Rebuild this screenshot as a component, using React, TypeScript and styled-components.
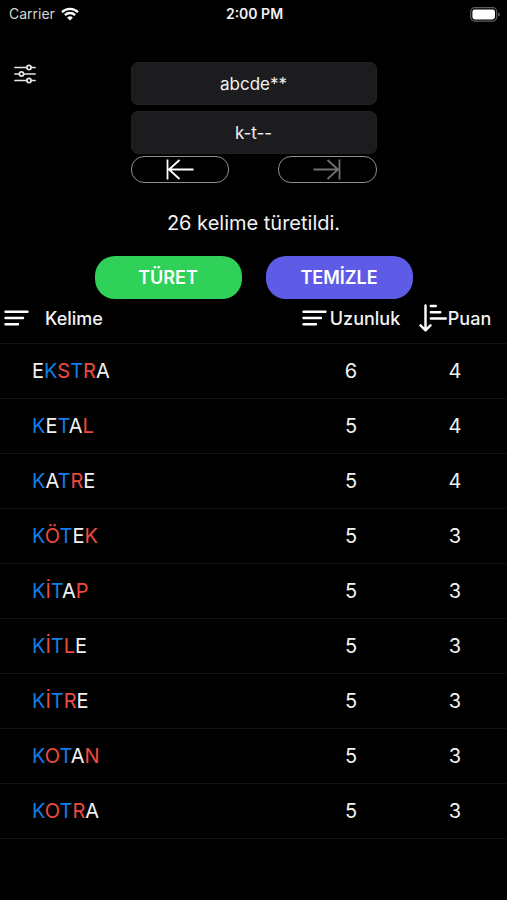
import React, { useState } from "react";
import styled, { createGlobalStyle } from "styled-components";

const GlobalStyle = createGlobalStyle`
  *, *::before, *::after { box-sizing: border-box; }
  body {
    margin: 0;
    background: #000;
    color: #f2f2f2;
    font-family: Inter, "Liberation Sans", sans-serif;
  }
  button, input { font: inherit; color: inherit; }
`;

const Screen = styled.div`
  min-height: 100vh;
  background: #000;
`;

const StatusBar = styled.header`
  display: grid;
  grid-template-columns: 1fr auto 1fr;
  align-items: center;
  height: 28px;
  padding: 0 7px 0 9px;
  font-size: 14px;
  line-height: 16px;
`;

const Carrier = styled.div`
  display: flex;
  align-items: center;
  gap: 6px;
  color: #d6d6d6;
`;

const Clock = styled.time`
  font-weight: 600;
`;

const BatterySlot = styled.div`
  display: flex;
  justify-content: flex-end;
`;

const SearchPanel = styled.section`
  display: grid;
  grid-template-columns: 1fr minmax(0, 246px) 1fr;
  padding: 34px 14px 0;
`;

const IconButton = styled.button`
  display: flex;
  justify-self: start;
  align-self: start;
  padding: 2px 0;
  border: 0;
  background: none;
  cursor: pointer;
`;

const Fields = styled.div`
  display: flex;
  flex-direction: column;
`;

const Field = styled.input`
  width: 100%;
  height: 43px;
  padding: 0 12px;
  border: 1px solid #222224;
  border-radius: 7px;
  background: #1c1c1e;
  font-size: 17px;
  text-align: center;

  & + & { margin-top: 6px; }
`;

const StepRow = styled.div`
  display: flex;
  justify-content: space-between;
  margin-top: 2px;
`;

const StepButton = styled.button`
  display: flex;
  align-items: center;
  justify-content: center;
  width: 40%;
  height: 27px;
  padding: 0;
  border: 1px solid #8f8f8f;
  border-radius: 13px;
  background: none;
  color: #fff;

  &:disabled { color: #707070; }
`;

const Message = styled.p`
  margin: 26px 0 0;
  font-size: 20px;
  line-height: 28px;
  text-align: center;
`;

const Actions = styled.div`
  display: flex;
  justify-content: center;
  gap: 24px;
  margin-top: 19px;
`;

const ActionButton = styled.button<{ $color: string }>`
  width: 147px;
  height: 43px;
  padding: 0;
  border: 0;
  border-radius: 20px;
  background: ${({ $color }) => $color};
  color: #fff;
  font-size: 18px;
  font-weight: 600;
  cursor: pointer;
`;

const Table = styled.table`
  width: 100%;
  table-layout: fixed;
  border-collapse: collapse;
`;

const HeadCell = styled.th<{ $wide?: boolean }>`
  width: ${({ $wide }) => ($wide ? "auto" : "104px")};
  height: 44px;
  padding: 4px 0 0 ${({ $wide }) => ($wide ? "4px" : "0")};
  vertical-align: top;
  border-bottom: 1px solid #121213;
`;

const SortButton = styled.button<{ $gap: number; $start?: boolean }>`
  display: flex;
  align-items: center;
  justify-content: ${({ $start }) => ($start ? "flex-start" : "center")};
  gap: ${({ $gap }) => $gap}px;
  width: 100%;
  height: 30px;
  padding: 0;
  border: 0;
  background: none;
  font-size: 18px;
  font-weight: 500;
  cursor: pointer;
`;

const Cell = styled.td<{ $word?: boolean }>`
  height: 55px;
  padding: 0 0 0 ${({ $word }) => ($word ? "32px" : "0")};
  border-bottom: 1px solid #121213;
  font-size: 20px;
  text-align: ${({ $word }) => ($word ? "left" : "center")};
`;

const tones = { w: "#f2f2f2", b: "#127de6", r: "#ee4a3f" };
type Tone = keyof typeof tones;

const Letter = styled.span<{ $tone: Tone }>`
  color: ${({ $tone }) => tones[$tone]};
`;

const WifiIcon = () => (
  <svg width="18" height="14" viewBox="0 0 18 14" fill="none" stroke="#fff" strokeWidth="2.3" aria-hidden="true">
    <path d="M1 5.1a11.4 11.4 0 0 1 16 0" />
    <path d="M3.9 8.1a7.3 7.3 0 0 1 10.2 0" />
    <path d="M9 13.6 6.1 10.7a4.1 4.1 0 0 1 5.8 0z" fill="#fff" stroke="none" />
  </svg>
);

const BatteryIcon = () => (
  <svg width="30" height="15" viewBox="0 0 30 15" aria-hidden="true">
    <rect x="0.7" y="0.7" width="26" height="13.4" rx="4" fill="none" stroke="#5d5d5f" strokeWidth="1.2" />
    <rect x="2.4" y="2.4" width="22.6" height="10" rx="2.4" fill="#fff" />
    <path d="M28 5.2q1.8.8 1.8 2.2T28 9.6z" fill="#5d5d5f" />
  </svg>
);

const SlidersIcon = () => (
  <svg width="22" height="20" viewBox="0 0 22 20" fill="none" stroke="#e6e6e6" strokeWidth="1.7" aria-hidden="true">
    <path d="M1 3.5h11.8M17.2 3.5H21M1 10h4.3M9.7 10H21M1 16.5h11.8M17.2 16.5H21" strokeLinecap="round" />
    <circle cx="15" cy="3.5" r="2.1" />
    <circle cx="7.5" cy="10" r="2.1" />
    <circle cx="15" cy="16.5" r="2.1" />
  </svg>
);

const ToStartIcon = () => (
  <svg width="28" height="21" viewBox="0 0 28 21" fill="none" stroke="currentColor" strokeWidth="1.8" aria-hidden="true">
    <path d="M1.5 0.5v20M27.500 10.500H3M13.500 1 3 10.500 13.500 20" />
  </svg>
);

const ToEndIcon = () => (
  <svg width="28" height="21" viewBox="0 0 28 21" fill="none" stroke="currentColor" strokeWidth="1.8" aria-hidden="true">
    <path d="M26.5 0.5v20M0.5 10.5H25M14.5 1 25 10.5 14.5 20" />
  </svg>
);

const LinesIcon = () => (
  <svg width="25" height="16" viewBox="0 0 25 16" fill="none" stroke="#fff" strokeWidth="2.4" strokeLinecap="round" aria-hidden="true">
    <path d="M1.5 1.7h22M1.5 8h17.5M1.5 14.2h12.5" />
  </svg>
);

const SortDownIcon = () => (
  <svg width="28" height="28" viewBox="0 0 28 28" fill="none" stroke="#fff" strokeWidth="2.4" strokeLinecap="round" strokeLinejoin="round" aria-hidden="true">
    <path d="M6.5 1.5V26M1.5 21.3l5 5 5-5" />
    <path d="M11.8 2h5M11.8 8.2h9.5M11.8 14.5h15" />
  </svg>
);

type Result = { word: string; tones: string; points: number };

const results: Result[] = [
  { word: "EKSTRA", tones: "wbrbrw", points: 4 },
  { word: "KETAL", tones: "bwbwr", points: 4 },
  { word: "KATRE", tones: "bwbrw", points: 4 },
  { word: "KÖTEK", tones: "brbwr", points: 3 },
  { word: "KİTAP", tones: "brbwr", points: 3 },
  { word: "KİTLE", tones: "brbrw", points: 3 },
  { word: "KİTRE", tones: "brbrw", points: 3 },
  { word: "KOTAN", tones: "brbwr", points: 3 },
  { word: "KOTRA", tones: "brbrw", points: 3 },
];

const ResultRow = ({ word, tones: pattern, points }: Result) => (
  <tr>
    <Cell $word>
      {[...word].map((char, i) => (
        <Letter key={i} $tone={pattern[i] as Tone}>{char}</Letter>
      ))}
    </Cell>
    <Cell>{word.length}</Cell>
    <Cell>{points}</Cell>
  </tr>
);

export default function App() {
  const [letters, setLetters] = useState("abcde**");
  const [pattern, setPattern] = useState("k-t--");

  return (
    <Screen lang="tr">
      <GlobalStyle />
      <StatusBar>
        <Carrier>Carrier <WifiIcon /></Carrier>
        <Clock>2:00 PM</Clock>
        <BatterySlot><BatteryIcon /></BatterySlot>
      </StatusBar>
      <main>
        <SearchPanel>
          <IconButton type="button" aria-label="Ayarlar"><SlidersIcon /></IconButton>
          <Fields>
            <Field aria-label="Harfler" value={letters} onChange={(e) => setLetters(e.target.value)} />
            <Field aria-label="Kalıp" value={pattern} onChange={(e) => setPattern(e.target.value)} />
            <StepRow>
              <StepButton type="button" aria-label="Önceki"><ToStartIcon /></StepButton>
              <StepButton type="button" aria-label="Sonraki" disabled><ToEndIcon /></StepButton>
            </StepRow>
          </Fields>
        </SearchPanel>
        <Message>26 kelime türetildi.</Message>
        <Actions>
          <ActionButton type="button" $color="#30d158">TÜRET</ActionButton>
          <ActionButton type="button" $color="#5e5ce6">TEMİZLE</ActionButton>
        </Actions>
        <Table>
          <thead>
            <tr>
              <HeadCell scope="col" $wide>
                <SortButton type="button" $gap={16} $start><LinesIcon />Kelime</SortButton>
              </HeadCell>
              <HeadCell scope="col">
                <SortButton type="button" $gap={3}><LinesIcon />Uzunluk</SortButton>
              </HeadCell>
              <HeadCell scope="col">
                <SortButton type="button" $gap={1}><SortDownIcon />Puan</SortButton>
              </HeadCell>
            </tr>
          </thead>
          <tbody>
            {results.map((r) => <ResultRow key={r.word} {...r} />)}
          </tbody>
        </Table>
      </main>
    </Screen>
  );
}
